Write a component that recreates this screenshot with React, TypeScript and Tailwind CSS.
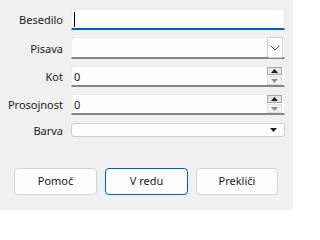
import * as React from "react"

type FieldRowProps = {
  label: string
  className?: string
  children: React.ReactNode
}

function FieldRow({ label, className, children }: FieldRowProps) {
  return (
    <div className={"flex items-center " + (className ?? "")}>
      <div className="w-[64px] shrink-0 pr-px text-right text-[11px] leading-none text-[#1a1a1a]">{label}</div>
      <div className="ml-[7px] flex h-full flex-1 items-stretch">{children}</div>
    </div>
  )
}

function SpinButtons() {
  return (
    <div className="mr-[2px] flex w-[15px] flex-col justify-center gap-px py-[2px]">
      <div className="flex h-[8px] items-center justify-center border border-[#a8a8a8] bg-[#e6e6e6]">
        <svg width="7" height="4" viewBox="0 0 7 4">
          <path d="M0 4 L3.5 0 L7 4 Z" fill="#1a1a1a" />
        </svg>
      </div>
      <div className="flex h-[9px] items-center justify-center border border-[#e0e0e0] bg-[#f3f3f3]">
        <svg width="7" height="4" viewBox="0 0 7 4">
          <path d="M0 0 L7 0 L3.5 4 Z" fill="#8d8d8d" />
        </svg>
      </div>
    </div>
  )
}

function NumberField({ value }: { value: string }) {
  return (
    <div className="flex flex-1 items-center rounded-t-[3px] border border-b-2 border-[#ececec] border-b-[#868686] bg-[#fdfdfd]">
      <span className="flex-1 pl-[2px] text-[11px] leading-none text-[#1a1a1a]">{value}</span>
      <SpinButtons />
    </div>
  )
}

export default function App() {
  return (
    <div className="flex h-[210px] w-[293px] flex-col bg-[#f0f0f0] pr-[8px] pt-[9px] font-['Noto_Sans',sans-serif]">
      <div className="flex flex-col gap-[7px]">
        <FieldRow label="Besedilo" className="h-[21px]">
          <div className="flex flex-1 items-center rounded-t-[3px] border border-b-2 border-[#ececec] border-b-[#005fb8] bg-white">
            <span className="ml-[2px] h-[15px] w-px bg-black" />
          </div>
        </FieldRow>
        <FieldRow label="Pisava" className="h-[22px]">
          <div className="flex flex-1 items-center justify-end rounded-t-[3px] border border-b-2 border-[#ececec] border-b-[#868686] bg-[#fdfdfd]">
            <div className="mr-px flex h-[21px] w-[16px] items-center justify-center rounded-[2px] border border-[#d0d0d0] bg-white">
              <svg width="10" height="6" viewBox="0 0 10 6">
                <path d="M0.5 0.5 L5 5 L9.5 0.5" fill="none" stroke="#555" strokeWidth="1" />
              </svg>
            </div>
          </div>
        </FieldRow>
        <FieldRow label="Kot" className="h-[21px]">
          <NumberField value="0" />
        </FieldRow>
        <FieldRow label="Prosojnost" className="h-[21px]">
          <NumberField value="0" />
        </FieldRow>
        <FieldRow label="Barva" className="mt-px h-[14px]">
          <div className="flex flex-1 items-center justify-end rounded-[3px] border border-[#cfcfcf] bg-[#fdfdfd] pr-[7px]">
            <svg width="7" height="4" viewBox="0 0 7 4">
              <path d="M0 0 L7 0 L3.5 4 Z" fill="#1a1a1a" />
            </svg>
          </div>
        </FieldRow>
      </div>
      <div className="mt-[31px] flex gap-[8px] pl-[14px]">
        <button className="h-[27px] w-[83px] rounded-[4px] border border-[#d5d5d5] bg-[#fdfdfd] text-[11px] text-[#1a1a1a]">Pomoč</button>
        <button className="h-[27px] w-[83px] rounded-[4px] border border-[#005fb8] bg-[#fdfdfd] text-[11px] text-[#1a1a1a]">V redu</button>
        <button className="h-[27px] w-[82px] rounded-[4px] border border-[#d5d5d5] bg-[#fdfdfd] text-[11px] text-[#1a1a1a]">Prekliči</button>
      </div>
    </div>
  )
}
